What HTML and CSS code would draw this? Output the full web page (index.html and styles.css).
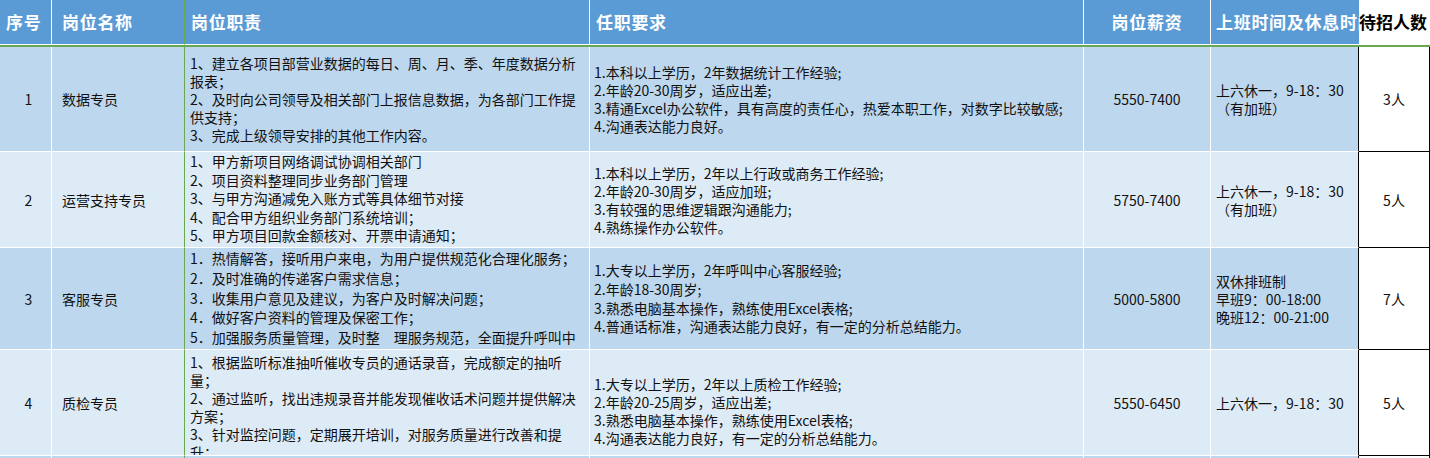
FILE: index.html
```html
<!DOCTYPE html>
<html lang="zh-CN">
<head>
<meta charset="utf-8">
<title>招聘岗位</title>
<link rel="stylesheet" href="styles.css">
</head>
<body>
<div class="sheet">
  <div class="cell hd c-idx">序号</div>
  <div class="cell hd c-name">岗位名称</div>
  <div class="cell hd c-duty">岗位职责</div>
  <div class="cell hd c-req">任职要求</div>
  <div class="cell hd c-pay">岗位薪资</div>
  <div class="cell hd c-time">上班时间及休息时间</div>
  <div class="cell hd-num">待招人数</div>
  <div class="rule"></div>

  <div class="cell odd c-idx">1</div>
  <div class="cell odd c-name">数据专员</div>
  <div class="cell odd c-duty"><div class="txt lh18">1、建立各项目部营业数据的每日、周、月、季、年度数据分析报表；<br>2、及时向公司领导及相关部门上报信息数据，为各部门工作提供支持；<br>3、完成上级领导安排的其他工作内容。</div></div>
  <div class="cell odd c-req"><div class="txt">1.本科以上学历，2年数据统计工作经验;<br>2.年龄20-30周岁，适应出差;<br>3.精通Excel办公软件，具有高度的责任心，热爱本职工作，对数字比较敏感;<br>4.沟通表达能力良好。</div></div>
  <div class="cell odd c-pay">5550-7400</div>
  <div class="cell odd c-time"><div class="txt">上六休一，9-18：30<br>（有加班）</div></div>
  <div class="cell c-num">3人</div>

  <div class="cell even c-idx">2</div>
  <div class="cell even c-name">运营支持专员</div>
  <div class="cell even c-duty top"><div class="txt lh185">1、甲方新项目网络调试协调相关部门<br>2、项目资料整理同步业务部门管理<br>3、与甲方沟通减免入账方式等具体细节对接<br>4、配合甲方组织业务部门系统培训；<br>5、甲方项目回款金额核对、开票申请通知；<br>6、负责系统账户数据的维护，及系统运营状态监控等</div></div>
  <div class="cell even c-req"><div class="txt">1.本科以上学历，2年以上行政或商务工作经验;<br>2.年龄20-30周岁，适应加班;<br>3.有较强的思维逻辑跟沟通能力;<br>4.熟练操作办公软件。</div></div>
  <div class="cell even c-pay">5750-7400</div>
  <div class="cell even c-time"><div class="txt">上六休一，9-18：30<br>（有加班）</div></div>
  <div class="cell c-num">5人</div>

  <div class="cell odd c-idx">3</div>
  <div class="cell odd c-name">客服专员</div>
  <div class="cell odd c-duty top pad1"><div class="txt lh198">1．热情解答，接听用户来电，为用户提供规范化合理化服务；<br>2．及时准确的传递客户需求信息；<br>3．收集用户意见及建议，为客户及时解决问题；<br>4．做好客户资料的管理及保密工作；<br>5．加强服务质量管理，及时整　理服务规范，全面提升呼叫中心服务水平。</div></div>
  <div class="cell odd c-req"><div class="txt lh187">1.大专以上学历，2年呼叫中心客服经验;<br>2.年龄18-30周岁;<br>3.熟悉电脑基本操作，熟练使用Excel表格;<br>4.普通话标准，沟通表达能力良好，有一定的分析总结能力。</div></div>
  <div class="cell odd c-pay">5000-5800</div>
  <div class="cell odd c-time"><div class="txt">双休排班制<br>早班9：00-18:00<br>晚班12：00-21:00</div></div>
  <div class="cell c-num">7人</div>

  <div class="cell even c-idx">4</div>
  <div class="cell even c-name">质检专员</div>
  <div class="cell even c-duty top pad3"><div class="txt lh18">1、根据监听标准抽听催收专员的通话录音，完成额定的抽听量；<br>2、通过监听，找出违规录音并能发现催收话术问题并提供解决方案；<br>3、针对监控问题，定期展开培训，对服务质量进行改善和提升；<br>4、完成上级领导安排的其他工作。</div></div>
  <div class="cell even c-req low"><div class="txt">1.大专以上学历，2年以上质检工作经验;<br>2.年龄20-25周岁，适应出差;<br>3.熟悉电脑基本操作，熟练使用Excel表格;<br>4.沟通表达能力良好，有一定的分析总结能力。</div></div>
  <div class="cell even c-pay">5550-6450</div>
  <div class="cell even c-time"><div class="txt">上六休一，9-18：30</div></div>
  <div class="cell c-num">5人</div>

  <div class="cell odd c-idx"></div>
  <div class="cell odd c-name"></div>
  <div class="cell odd c-duty"></div>
  <div class="cell odd c-req"></div>
  <div class="cell odd c-pay"></div>
  <div class="cell odd c-time"></div>
  <div class="cell c-num"></div>
</div>
</body>
</html>
```

FILE: styles.css
```css
html, body {
  margin: 0;
  padding: 0;
  background: #ffffff;
}
body {
  width: 1430px;
  height: 458px;
  overflow: hidden;
  font-family: "Noto Sans CJK SC", "Noto Sans", sans-serif;
  color: #111;
}
.sheet {
  display: grid;
  grid-template-columns: 52px 133px 405px 494px 127px 148px 71px;
  grid-template-rows: 45px 2px 105px 96px 102px 106px 30px;
}
.cell {
  box-sizing: border-box;
  display: flex;
  align-items: center;
  overflow: hidden;
  border-right: 1px solid #ffffff;
  border-bottom: 1px solid #ffffff;
  font-size: 14px;
  line-height: 18px;
}
.hd {
  background: #5b9bd5;
  color: #ffffff;
  font-weight: 700;
  font-size: 17px;
  letter-spacing: 0.7px;
  white-space: nowrap;
}
.hd-num {
  box-sizing: border-box;
  display: flex;
  align-items: center;
  background: #ffffff;
  color: #000;
  font-weight: 700;
  font-size: 17px;
  white-space: nowrap;
  overflow: hidden;
}
.rule {
  grid-column: 1 / -1;
  background: #6aa84f;
}
.odd { background: #bdd7ee; }
.even { background: #ddebf7; }

.c-idx { justify-content: center; padding-left: 6px; }
.hd.c-idx { justify-content: flex-start; padding-left: 6px; }
.c-name { padding-left: 10px; border-right-color: #6aa84f; }
.hd.c-name { border-right-color: #6aa84f; }
.c-duty { padding: 0 6px 0 5px; }
.hd.c-duty { padding-left: 6px; }
.c-req { padding-left: 4px; white-space: nowrap; }
.hd.c-req { padding-left: 6px; }
.c-pay { justify-content: center; }
.c-time { padding-left: 5px; white-space: nowrap; }
.odd.c-time, .even.c-time { border-right: 1px solid #000; }
.hd.c-time { padding-left: 5px; border-right: none; }
.c-num {
  justify-content: center;
  background: #ffffff;
  color: #111;
  border-right: 1px solid #000;
  border-bottom: 1px solid #000;
}

.top { align-items: flex-start; }
.pad1 { padding-top: 1px; }
.pad3 { padding-top: 3px; }
.low { padding-top: 16px; }

.txt { line-height: 18px; }
.lh18 { line-height: 18px; }
.lh185 { line-height: 18.6px; }
.lh198 { line-height: 19.8px; }
.lh187 { line-height: 18.7px; }
```
